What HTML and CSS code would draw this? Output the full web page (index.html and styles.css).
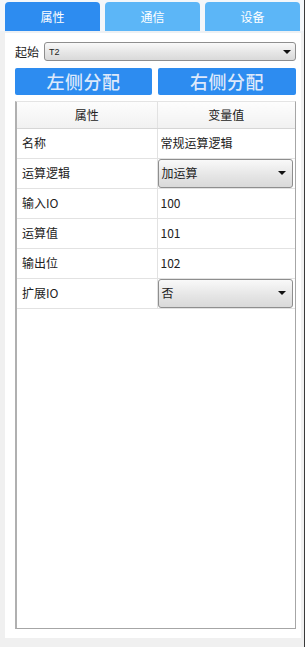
FILE: index.html
```html
<!DOCTYPE html>
<html lang="zh">
<head>
<meta charset="utf-8">
<link rel="stylesheet" href="styles.css">
</head>
<body>
<div class="app">
  <div class="tabs">
    <div class="tab active">属性</div>
    <div class="tab">通信</div>
    <div class="tab">设备</div>
  </div>
  <div class="panel">
    <div class="start-row">
      <span class="label">起始</span>
      <div class="select small"><span>T2</span><i class="caret"></i></div>
    </div>
    <div class="btn-row">
      <button class="btn">左侧分配</button>
      <button class="btn">右侧分配</button>
    </div>
    <div class="grid">
      <table>
        <thead>
          <tr><th class="c1">属性</th><th class="c2">变量值</th></tr>
        </thead>
        <tbody>
          <tr><td class="c1">名称</td><td class="c2">常规运算逻辑</td></tr>
          <tr><td class="c1">运算逻辑</td><td class="c2 sel"><div class="select cell"><span>加运算</span><i class="caret"></i></div></td></tr>
          <tr><td class="c1">输入IO</td><td class="c2">100</td></tr>
          <tr><td class="c1">运算值</td><td class="c2">101</td></tr>
          <tr><td class="c1">输出位</td><td class="c2">102</td></tr>
          <tr><td class="c1">扩展IO</td><td class="c2 sel"><div class="select cell"><span>否</span><i class="caret"></i></div></td></tr>
        </tbody>
      </table>
    </div>
  </div>
</div>
</body>
</html>
```

FILE: styles.css
```css
* { box-sizing: border-box; }
html, body { margin: 0; padding: 0; }
body {
  background: #f0f0f0;
  font-family: "Noto Sans CJK SC", "Noto Sans", sans-serif;
  font-size: 12px;
  color: #222;
}
.app {
  width: 305px;
  height: 647px;
  display: flex;
  flex-direction: column;
  background: #f0f0f0;
  border-right: 1px solid #3a3a3a;
}
.tabs {
  display: flex;
  gap: 5px;
  padding: 2px 4px 0 5px;
  background: #f4f7fa;
  height: 33px;
  border-bottom: 2px solid #eef1f4;
}
.tab {
  width: 95px;
  height: 29px;
  border-radius: 4px 4px 0 0;
  background: #5cb6f7;
  color: #fff;
  display: flex;
  align-items: center;
  justify-content: center;
  font-size: 12px;
  line-height: 1;
}
.tab.active { background: #2d8cf0; }
.panel {
  margin: 0 3px 0 5px;
  height: 605px;
  background: #fff;
  display: flex;
  flex-direction: column;
  padding: 9px 5px 9px 10px;
}
.start-row {
  display: flex;
  align-items: center;
  height: 19px;
}
.label {
  width: 29px;
  font-size: 12px;
  line-height: 1;
}
.select {
  position: relative;
  display: flex;
  align-items: center;
  background: linear-gradient(#f9f9f9, #e6e6e6 55%, #d9d9d9);
  border: 1px solid #8e8e8e;
  border-radius: 3px;
}
.select.small {
  flex: 1;
  height: 19px;
  padding-left: 4px;
  font-size: 9px;
  font-family: "Liberation Sans", sans-serif;
}
.caret {
  position: absolute;
  right: 4px;
  top: 50%;
  margin-top: -2px;
  width: 0;
  height: 0;
  border-left: 4px solid transparent;
  border-right: 4px solid transparent;
  border-top: 4px solid #111;
}
.btn-row {
  display: flex;
  gap: 6px;
  margin-top: 7px;
  height: 27px;
}
.btn {
  flex: 1;
  border: none;
  border-radius: 2px;
  background: #2d8cf0;
  color: #dde9fb;
  font-family: "Noto Sans CJK SC", sans-serif;
  font-weight: 500;
  font-size: 18px;
  line-height: 27px;
  padding: 0;
  letter-spacing: 0.5px;
}
.btn:first-child { flex: 0 0 137px; }
.grid {
  margin-top: 6px;
  flex: 1;
  border: 1px solid #a6a6a6;
  border-top-color: #e4e4e4;
  border-left: 2px solid #b0b0b0;
  background: #fff;
}
table {
  width: 100%;
  border-collapse: collapse;
  table-layout: fixed;
}
th, td {
  padding: 0;
  font-weight: 400;
  font-size: 12px;
  line-height: 1;
  border-bottom: 1px solid #e2e2e2;
}
th {
  height: 26px;
  text-align: center;
  background: linear-gradient(#fdfdfd, #f1f1f1);
  border-bottom-color: #d6d6d6;
}
td { height: 30px; }
.c1 {
  width: 140px;
  border-right: 1px solid #e2e2e2;
  text-align: left;
  padding-left: 5px;
}
th.c1 { text-align: center; padding-left: 0; }
td.c2 { padding-left: 3px; }
td.sel { padding: 0 2px 0 0; }
.select.cell {
  height: 29px;
  padding-left: 3px;
  font-size: 12px;
}
.select.cell .caret { right: 6px; }
```
